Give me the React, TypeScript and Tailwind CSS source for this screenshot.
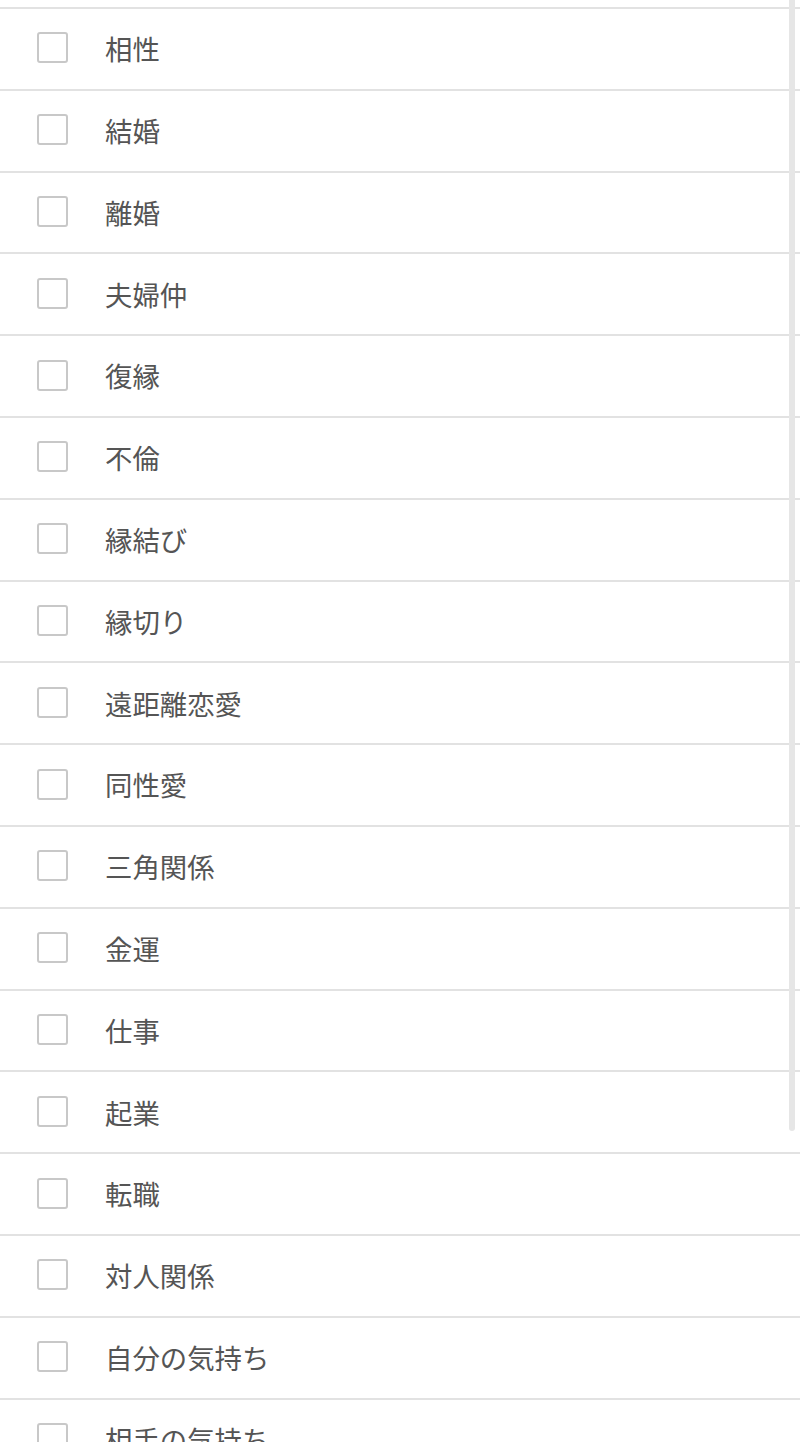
import React from "react";

const topics = [
  "相性",
  "結婚",
  "離婚",
  "夫婦仲",
  "復縁",
  "不倫",
  "縁結び",
  "縁切り",
  "遠距離恋愛",
  "同性愛",
  "三角関係",
  "金運",
  "仕事",
  "起業",
  "転職",
  "対人関係",
  "自分の気持ち",
  "相手の気持ち",
];

function TopicRow({ label }: { label: string }) {
  return (
    <label className="flex h-[81.8px] shrink-0 items-center border-b-2 border-[#e2e2e2] pl-[37px]">
      <span className="mb-[2px] h-[31px] w-[31px] shrink-0 rounded-[3px] border-2 border-[#c8c8c8] bg-white" />
      <span className="ml-[37px] text-[27.4px] leading-none text-[#555555]">{label}</span>
    </label>
  );
}

export default function App() {
  return (
    <div
      className="relative h-[1442px] w-[800px] overflow-hidden bg-white"
      style={{ fontFamily: '"Noto Sans CJK JP", "Noto Sans", sans-serif' }}
    >
      <div className="flex flex-col">
        <div className="h-[9px] shrink-0 border-b-2 border-[#e2e2e2]" />
        {topics.map((t) => (
          <TopicRow key={t} label={t} />
        ))}
      </div>
      <div className="absolute right-[5px] top-0 h-[1131px] w-[6px] rounded-b-full bg-[#e6e6e6]" />
    </div>
  );
}
